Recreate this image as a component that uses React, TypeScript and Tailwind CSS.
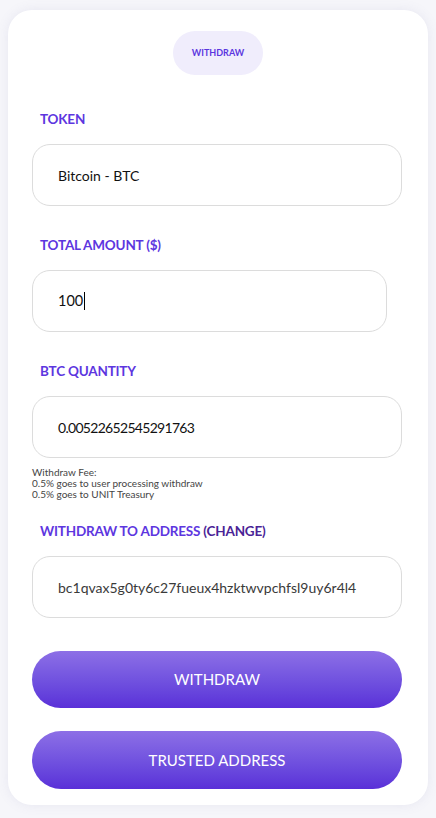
const font = { fontFamily: 'Lato, "Noto Sans", sans-serif' };

function Field({ label, value, className = 'w-[370px]', textClass = 'text-[14.5px] text-[#111]', caret = false }: {
  label: React.ReactNode;
  value: string;
  className?: string;
  textClass?: string;
  caret?: boolean;
}) {
  return (
    <div className="flex flex-col">
      <div className="pl-2 text-[13.5px] font-bold tracking-[-0.2px] text-[#5d36df] h-[18px] leading-[18px]">{label}</div>
      <div
        className={`${className} mt-[16px] h-[62px] rounded-[18px] border border-[#dcdcdc] bg-white flex items-center pl-[25px] ${textClass}`}
      >
        {value}
        {caret && <span className="ml-[1px] inline-block h-[18px] w-[1px] bg-black" />}
      </div>
    </div>
  );
}

export default function App() {
  return (
    <div className="min-h-[818px] bg-[#f6f6fa] px-2 pt-[10px]" style={font}>
      <div className="h-[795px] rounded-[24px] bg-white shadow-[0_0_12px_rgba(120,120,170,0.12)] pt-[21px] px-6">
        <div className="flex justify-center">
          <div className="w-[90px] h-[44px] rounded-full bg-[#f0edfc] flex items-center justify-center text-[9px] font-bold text-[#5b36df]">
            WITHDRAW
          </div>
        </div>

        <div className="mt-[35px] flex flex-col gap-[30px]">
          <Field label="TOKEN" value="Bitcoin - BTC" textClass="text-[14px] text-[#111]" />
          <Field label="TOTAL AMOUNT ($)" value="100" caret className="w-[355px]" />
          <div className="flex flex-col">
            <Field label="BTC QUANTITY" value="0.00522652545291763" textClass="text-[14px] tracking-[-0.7px] text-[#111]" />
            <div className="mt-[9px] text-[10px] leading-[11px] text-[#444]">
              <div>Withdraw Fee:</div>
              <div>0.5% goes to user processing withdraw</div>
              <div>0.5% goes to UNIT Treasury</div>
            </div>
          </div>
        </div>

        <div className="mt-[22px]">
          <Field
            label={<>WITHDRAW TO ADDRESS <span className="text-[#4a2396]">(CHANGE)</span></>}
            value="bc1qvax5g0ty6c27fueux4hzktwvpchfsl9uy6r4l4"
            textClass="text-[14px] text-[#3a3a3a]"
          />
        </div>

        <div className="mt-[33px] flex flex-col gap-[23px]">
          <button className="w-[370px] h-[57px] rounded-full bg-gradient-to-b from-[#8d6fe6] to-[#5a2fd8] text-white text-[15px]">
            WITHDRAW
          </button>
          <button className="w-[370px] h-[58px] rounded-full bg-gradient-to-b from-[#8d6fe6] to-[#5a2fd8] text-white text-[15px]">
            TRUSTED ADDRESS
          </button>
        </div>
      </div>
    </div>
  );
}
